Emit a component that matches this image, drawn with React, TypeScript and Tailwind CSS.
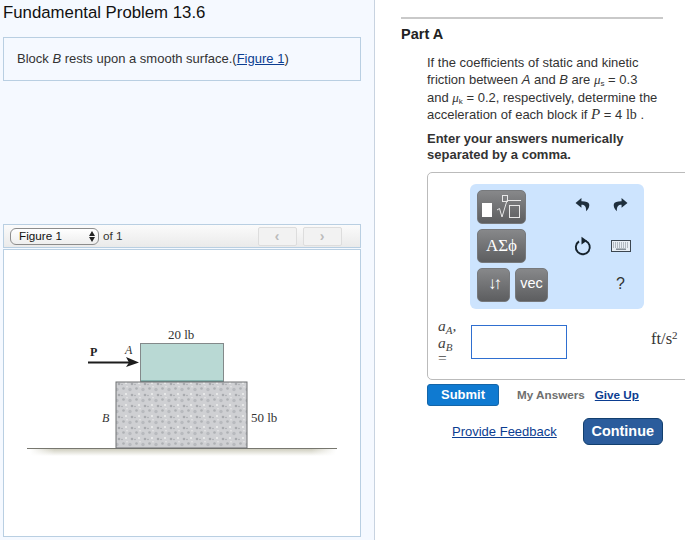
import React from 'react';

const sans = "font-['Liberation_Sans',Arial,sans-serif]";
const serif = "font-['Liberation_Serif','DejaVu_Serif',serif]";

/* ─── Figure drawing ─── */
const Diagram = () => (
  <svg width="356" height="220" viewBox="0 0 356 220" className="block">
    <defs>
      <pattern id="stone" width="13" height="11" patternUnits="userSpaceOnUse">
        <rect width="13" height="11" fill="#cfd0d3" />
        <circle cx="2.5" cy="2.5" r="1.3" fill="#aeb0b4" />
        <circle cx="9" cy="3.5" r="1.7" fill="#b8babe" />
        <circle cx="5" cy="8" r="1" fill="#f0f0f0" />
        <circle cx="11" cy="9" r="1.3" fill="#a8aaae" />
        <circle cx="6" cy="0.8" r="0.7" fill="#eeeeee" />
        <circle cx="1" cy="9.5" r="0.7" fill="#a1a3a7" />
      </pattern>
      <linearGradient id="shadow" x1="0" y1="0" x2="0" y2="1">
        <stop offset="0" stopColor="#cfcebf" />
        <stop offset="1" stopColor="#ffffff" />
      </linearGradient>
      <linearGradient id="shadowFade" x1="0" y1="0" x2="1" y2="0">
        <stop offset="0" stopColor="#ffffff" />
        <stop offset="0.08" stopColor="#ffffff" stopOpacity="0" />
        <stop offset="0.92" stopColor="#ffffff" stopOpacity="0" />
        <stop offset="1" stopColor="#ffffff" />
      </linearGradient>
    </defs>
    {/* svg origin sits at page x=4, y=320 */}
    <rect x="26" y="129" width="306" height="7" fill="url(#shadow)" />
    <rect x="26" y="129" width="306" height="7" fill="url(#shadowFade)" />
    <line x1="23" y1="128.5" x2="333" y2="128.5" stroke="#77776f" strokeWidth="1" />
    <rect x="136.5" y="23.5" width="83" height="38" fill="#b9d9d4" stroke="#83898a" />
    <line x1="137" y1="61" x2="219" y2="61" stroke="#4f8b86" strokeWidth="1" />
    <rect x="112" y="62" width="131" height="66" fill="url(#stone)" stroke="#6e7073" strokeWidth="1" />
    <line x1="84" y1="42.5" x2="127" y2="42.5" stroke="#1c1c1c" strokeWidth="2" />
    <path d="M122 37 L135 42.5 L122 47 L125 42.5 Z" fill="#1c1c1c" />
    <text x="86" y="36" fontSize="12" fontWeight="700" fill="#222" fontFamily="Liberation Serif">P</text>
    <text x="121" y="34" fontSize="12" fontStyle="italic" fill="#333" fontFamily="Liberation Serif">A</text>
    <text x="164" y="19" fontSize="13" fill="#333" fontFamily="Liberation Serif">20 lb</text>
    <text x="98" y="102" fontSize="12" fontStyle="italic" fill="#333" fontFamily="Liberation Serif">B</text>
    <text x="247" y="102" fontSize="13" fill="#333" fontFamily="Liberation Serif">50 lb</text>
  </svg>
);

/* ─── Math toolbar icons ─── */
const TemplatesIcon = () => (
  <svg width="44" height="26" viewBox="0 0 44 26" fill="none">
    <rect x="2" y="9" width="10" height="14" fill="#fff" />
    <rect x="22.5" y="1.5" width="5" height="6" stroke="#e8e8e8" />
    <path d="M17 16 L19.5 14.5 L22 23 L27 6.5 H41" stroke="#e8e8e8" strokeWidth="1" />
    <rect x="29.5" y="11.5" width="10" height="12" stroke="#e8e8e8" />
  </svg>
);

const UndoIcon = ({ flip }: { flip?: boolean }) => (
  <svg width="15" height="15" viewBox="0 0 14 14" className={flip ? '-scale-x-100' : ''}>
    <path d="M6 1 L0.5 5.6 L6 10 V7.2 C9 7.2 10.6 8.6 10.4 13.4 C12.6 11.4 13.8 8.8 13.2 6.6 C12.6 4.6 9.6 3.8 6 3.9 Z" fill="#1f2f3d" />
  </svg>
);

const RefreshIcon = () => (
  <svg width="18" height="20" viewBox="0 0 18 20" fill="none">
    <path d="M5 5.4 A7 7 0 1 0 11.5 4.8" stroke="#15222c" strokeWidth="1.9" />
    <path d="M7.5 0.8 L13 4.8 L7.5 8.4 Z" fill="#15222c" />
  </svg>
);

const KeyboardIcon = () => (
  <svg width="20" height="12" viewBox="0 0 20 12">
    <rect x="0.5" y="0.5" width="19" height="11" fill="#e8eef4" stroke="#3c4650" />
    <path d="M2 3 H18 M2 5 H18 M2 7 H18" stroke="#7a838c" strokeWidth="1" strokeDasharray="1 1" />
    <rect x="5" y="8.5" width="10" height="1.4" fill="#7a838c" />
  </svg>
);

const toolButton =
  'flex items-center justify-center rounded-[5px] border border-[#77797c] bg-gradient-to-b from-[#87888a] to-[#5d5e60] text-white';

const MathToolbar = () => (
  <div className="ml-[42px] flex h-[125px] w-[174px] rounded-[6px] bg-[#cde4fe] pl-[7px] pt-[6px]">
    <div className="flex w-[71px] flex-col gap-[5px]">
      <div className={`${toolButton} h-[34px] w-[49px]`}>
        <TemplatesIcon />
      </div>
      <div className={`${toolButton} ${serif} h-[34px] w-[49px] text-[17px] text-[#f0f0f0]`}>ΑΣϕ</div>
      <div className="flex gap-[5px]">
        <div className={`${toolButton} h-[34px] w-[33px] pb-[2px] text-[17px] tracking-[-3px] text-[#eeeeee]`}>↓↑</div>
        <div className={`${toolButton} ${sans} h-[34px] w-[33px] pb-[3px] text-[14.5px] text-[#f4f4f4]`}>vec</div>
      </div>
    </div>
    <div className="ml-[17px] grid h-[112px] grid-cols-2 grid-rows-3 gap-x-[3px]">
      <div className="flex w-[35px] items-center justify-center pb-[8px]"><UndoIcon /></div>
      <div className="flex w-[35px] items-center justify-center pb-[8px]"><UndoIcon flip /></div>
      <div className="flex items-center justify-center"><RefreshIcon /></div>
      <div className="flex items-center justify-center"><KeyboardIcon /></div>
      <div />
      <div className={`${sans} flex items-center justify-center text-[16px] text-[#333]`}>?</div>
    </div>
  </div>
);

const Sub = ({ children }: { children: React.ReactNode }) => (
  <sub className="text-[8px] leading-none">{children}</sub>
);

export default function App() {
  return (
    <div className={`${sans} flex h-[540px] w-[685px] overflow-hidden bg-white`}>
      {/* Left column */}
      <div className="h-[540px] w-[375px] shrink-0 border-r border-[#c8d3e0] bg-[#f5f9ff] pl-[3px]">
        <h1 className="h-[37px] pt-[3px] text-[16.8px] leading-[20px] text-[#111]">Fundamental Problem 13.6</h1>
        <div className="flex h-[44px] w-[358px] items-center border border-[#b9cfe2] pl-[13px] text-[13px] text-[#333]">
          <span>
            Block <i>B</i> rests upon a smooth surface.(<span className="text-[#0b3d91] underline">Figure 1</span>)
          </span>
        </div>

        {/* Figure viewer */}
        <div className="mt-[143px] flex h-[24px] w-[358px] items-center border border-[#b9cfe2] bg-gradient-to-b from-[#fbfbfb] to-[#eaeaea] pl-[6px] text-[11.7px] text-[#333]">
          <div className="flex h-[17px] w-[89px] items-center justify-between rounded-[6px] border border-[#8c8c8c] bg-gradient-to-b from-white to-[#eeeeee] pl-[8px] pr-[3px] text-[#111]">
            <span>Figure 1</span>
            <span className="flex flex-col gap-[1px]">
              <span className="h-0 w-0 border-x-[3px] border-b-[5px] border-x-transparent border-b-[#222]" />
              <span className="h-0 w-0 border-x-[3px] border-t-[5px] border-x-transparent border-t-[#222]" />
            </span>
          </div>
          <span className="ml-[4px]">of 1</span>
          <div className="ml-[135px] flex gap-[6px] pt-[1px]">
            <div className="flex h-[19px] w-[39px] items-center justify-center rounded-[2px] border border-[#dddddd] bg-[#f2f2f2] text-[14px] font-bold text-[#bbbbbb]">‹</div>
            <div className="flex h-[19px] w-[39px] items-center justify-center rounded-[2px] border border-[#dddddd] bg-[#f2f2f2] text-[14px] font-bold text-[#bbbbbb]">›</div>
          </div>
        </div>
        <div className="mt-[1px] h-[288px] w-[358px] border border-[#b9cfe2] bg-white pt-[70px]">
          <Diagram />
        </div>
      </div>

      {/* Right column */}
      <div className="w-[310px] shrink-0 pt-[17px] pl-[26px]">
        <div className="h-[2px] w-[262px] bg-[#c9c9c9]" />
        <h2 className="mt-[6px] text-[14.5px] font-bold leading-[18px] text-[#222]">Part A</h2>
        <div className="ml-[26px] mt-[11px] w-[240px] text-[13px] leading-[17.3px] text-[#333]">
          <p>
            If the coefficients of static and kinetic
            <br />
            friction between <i>A</i> and <i>B</i> are <i className={serif}>μ</i><Sub>s</Sub> = 0.3
            <br />
            and <i className={serif}>μ</i><Sub>k</Sub> = 0.2, respectively, determine the
            <br />
            acceleration of each block if <i className={`${serif} text-[15px] leading-none`}>P</i> = 4{' '}
            <span className={`${serif} text-[14px] leading-none`}>lb</span> .
          </p>
          <p className="mt-[8px] font-bold leading-[16px]">
            Enter your answers numerically
            <br />
            separated by a comma.
          </p>
        </div>

        {/* Answer box */}
        <div className="ml-[26px] mt-[9px] h-[208px] w-[300px] rounded-bl-[5px] rounded-tl-[5px] border border-[#bbbbbb] bg-white pt-[11px]">
          <MathToolbar />
          <div className="mt-[9px] flex items-start">
            <div className={`${serif} ml-[10px] w-[33px] text-[15.5px] italic leading-[16px] text-[#444]`}>
              <div>a<sub className="text-[11px] leading-none">A</sub>,</div>
              <div className="mt-[1px]">a<sub className="text-[11px] leading-none">B</sub></div>
              <div className="-mt-[1px] not-italic">=</div>
            </div>
            <div className="mt-[7px] h-[34px] w-[96px] border border-[#2f6fd0] bg-white" />
            <div className={`${serif} ml-[84px] mt-[12px] text-[16.5px] leading-[18px] text-[#333]`}>
              ft/s<sup className="text-[11px] leading-none">2</sup>
            </div>
          </div>
        </div>

        {/* Actions */}
        <div className="ml-[26px] mt-[4px] flex items-center text-[11.7px] font-bold">
          <div className="flex h-[22px] w-[72px] items-center justify-center rounded-[3px] border border-[#1465a8] bg-[#0f7ad1] text-[13px] text-white">Submit</div>
          <span className="ml-[18px] text-[#6f6f6f]">My Answers</span>
          <span className="ml-[10px] text-[#0b3d91] underline">Give Up</span>
        </div>
        <div className="ml-[51px] mt-[12px] flex items-center">
          <span className="text-[13px] text-[#0b3d91] underline">Provide Feedback</span>
          <div className="ml-[26px] flex h-[27px] w-[80px] items-center justify-center rounded-[6px] border border-[#123f6e] bg-[#2b5c9c] text-[14.4px] font-bold text-white">Continue</div>
        </div>
      </div>
    </div>
  );
}
